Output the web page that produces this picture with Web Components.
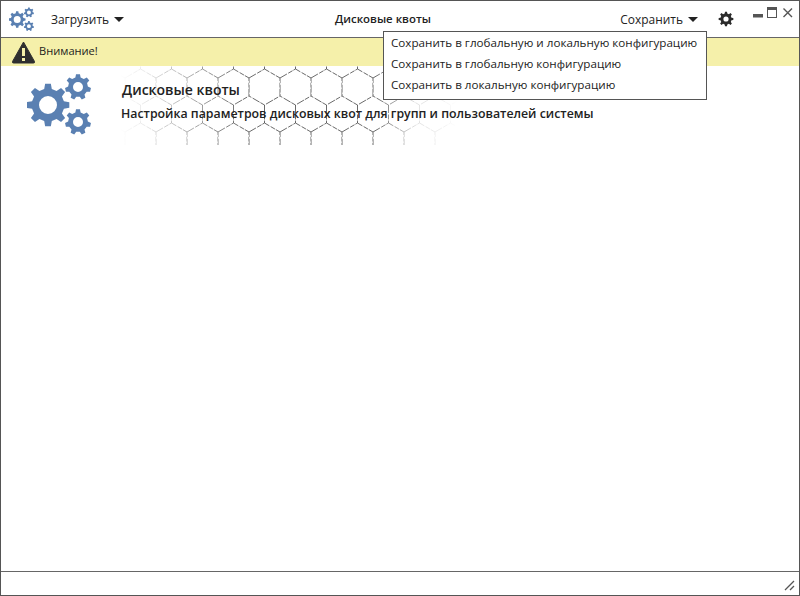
<!DOCTYPE html>
<html lang="ru">
<head>
<meta charset="utf-8">
<title>Дисковые квоты</title>
<style>
html,body{ margin:0; height:100%; background:#fff; }
body{ font:11.7px "Open Sans",sans-serif; color:#222; }
</style>
</head>
<body>
<app-window>
  <app-toolbar slot="top" title-text="Дисковые квоты"></app-toolbar>
  <warning-bar slot="top">Внимание!</warning-bar>
  <page-header heading="Дисковые квоты" sub="Настройка параметров дисковых квот для групп и пользователей системы"></page-header>
  <save-menu slot="over">
    <div>Сохранить в глобальную и локальную конфигурацию</div>
    <div>Сохранить в глобальную конфигурацию</div>
    <div>Сохранить в локальную конфигурацию</div>
  </save-menu>
</app-window>

<script>
// gear outline, teeth are drawn as trapezoids round the rim
function gearPath(cx, cy, r, hole, teeth){
   let d = "";
   let step = Math.PI * 2 / teeth;
   let inner = r * 0.76;
   for(let i = 0; i < teeth; i++){
      let a = i * step - Math.PI / 2;
      let pts = [
         [inner, a - step * 0.3],
         [r, a - step * 0.17],
         [r, a + step * 0.17],
         [inner, a + step * 0.3]
      ];
      pts.forEach((p, n) => {
         let x = (cx + p[0] * Math.cos(p[1])).toFixed(2);
         let y = (cy + p[0] * Math.sin(p[1])).toFixed(2);
         d += (i == 0 && n == 0 ? "M" : "L") + x + " " + y;
      });
   }
   d += `ZM${cx - hole} ${cy}a${hole} ${hole} 0 1 0 ${hole * 2} 0a${hole} ${hole} 0 1 0 ${-hole * 2} 0Z`;
   return d;
}

window.customElements.define('gears-icon', class extends HTMLElement {
   connectedCallback(){
      this.attachShadow({mode:'open'}).innerHTML = `
      <style>:host{ display:block; line-height:0; } svg{ display:block; }</style>
      <svg viewBox="0 0 64 64" style="width:100%;height:100%" fill="#5a80b2" fill-rule="evenodd">
         <path d="${gearPath(21, 32, 21.5, 9, 8)}"/>
         <path d="${gearPath(51, 14, 13, 5, 7)}"/>
         <path d="${gearPath(51, 49, 13, 5, 7)}"/>
      </svg>`;
   }
});

window.customElements.define('tool-button', class extends HTMLElement {
   connectedCallback(){
      this.attachShadow({mode:'open'}).innerHTML = `
      <style>
      :host{ display:inline-flex; align-items:center; gap:5px; color:#222; font-size:11.95px; }
      i{ display:block; width:0; height:0; border:5px solid transparent; border-top:5.5px solid #222; border-bottom:0; }
      </style>
      <slot></slot><i></i>`;
   }
});

window.customElements.define('app-toolbar', class extends HTMLElement {
   connectedCallback(){
      this.attachShadow({mode:'open'}).innerHTML = `
      <style>
      :host{ display:grid; grid-template-columns:334px auto 1fr; align-items:center; height:36px; border-bottom:1px solid #666; position:relative; }
      .left,.right{ display:flex; align-items:center; }
      .left{ padding-left:8px; gap:17px; }
      .right{ justify-content:flex-end; height:100%; }
      gears-icon{ width:25px; height:25px; }
      .title{ font-weight:600; font-size:11.4px; padding-bottom:2px; }
      .cog{ margin-left:20px; margin-right:18px; display:block; }
      .win{ align-self:flex-start; margin:6px 6px 0 0; display:block; }
      </style>
      <div class="left"><gears-icon></gears-icon><tool-button>Загрузить</tool-button></div>
      <div class="title">${this.getAttribute("title-text")}</div>
      <div class="right">
         <tool-button>Сохранить</tool-button>
         <svg class="cog" width="16" height="16" viewBox="0 0 16 16" fill="#2b2b2b" fill-rule="evenodd"><path d="${gearPath(8, 8, 7.4, 2.6, 8)}"/></svg>
         <svg class="win" width="41" height="12" viewBox="0 0 41 12">
            <rect x="1" y="7" width="10" height="3.5" fill="#555"/>
            <rect x="15.5" y="0.5" width="9" height="10" fill="none" stroke="#555"/>
            <rect x="15" y="0" width="10" height="3" fill="#555"/>
            <path d="M31.5 1.5l8.5 8.5M40 1.5l-8.5 8.5" stroke="#555" stroke-width="1.4" fill="none"/>
         </svg>
      </div>`;
   }
});

window.customElements.define('warning-bar', class extends HTMLElement {
   connectedCallback(){
      this.attachShadow({mode:'open'}).innerHTML = `
      <style>
      :host{ display:flex; align-items:center; gap:3px; height:28px; padding-left:10px; background:#f5f0aa; font-size:11.1px; font-weight:500; color:#1c1c1c; }
      svg{ display:block; }
      span{ padding-bottom:3px; }
      </style>
      <svg width="25" height="24" viewBox="0 0 25 24">
         <path d="M12.5 2L23.5 21.5Q24 23 22.5 23H2.5Q1 23 1.5 21.5Z" fill="#2f2f2f" stroke="#2f2f2f" stroke-linejoin="round"/>
         <rect x="11" y="8" width="3" height="8" fill="#f5f0aa"/>
         <rect x="11" y="18" width="3" height="3" fill="#f5f0aa"/>
      </svg>
      <span><slot></slot></span>`;
   }
});

window.customElements.define('hex-backdrop', class extends HTMLElement {
   connectedCallback(){
      let fade = "linear-gradient(90deg,transparent 0,rgba(0,0,0,.15) 25px,rgba(0,0,0,.55) 70px,#000 125px,#000 255px,rgba(0,0,0,.2) 295px,rgba(0,0,0,.08) 325px,transparent 337px)";
      this.attachShadow({mode:'open'}).innerHTML = `
      <style>
      :host{ display:block; position:absolute; left:119px; top:0; width:337px; height:79px;
         -webkit-mask-image:${fade}; mask-image:${fade}; }
      svg{ display:block; }
      </style>
      <svg width="337" height="79">
         <defs>
            <pattern id="hex" patternUnits="userSpaceOnUse" width="31" height="54" x="5" y="0">
               <path d="M0 12L15.5 3L31 12V30L15.5 39L0 30ZM15.5 39V57M15.5 -15V3" fill="none" stroke="#444" stroke-width=".8" stroke-dasharray="8 1.5 5 1"/>
            </pattern>
         </defs>
         <rect width="337" height="79" fill="url(#hex)"/>
      </svg>`;
   }
});

window.customElements.define('page-header', class extends HTMLElement {
   connectedCallback(){
      this.attachShadow({mode:'open'}).innerHTML = `
      <style>
      :host{ display:flex; position:relative; height:80px; padding:7px 0 0 26px; box-sizing:border-box; color:#222; }
      gears-icon{ width:64px; height:64px; flex:none; }
      .text{ position:relative; margin-left:31px; padding-top:7px; }
      .h{ font-size:14px; font-weight:600; line-height:20px; }
      .s{ font-size:12.35px; font-weight:600; line-height:18px; margin-top:5px; margin-left:-1px; white-space:nowrap; }
      </style>
      <hex-backdrop></hex-backdrop>
      <gears-icon></gears-icon>
      <div class="text">
         <div class="h">${this.getAttribute("heading")}</div>
         <div class="s">${this.getAttribute("sub")}</div>
      </div>`;
   }
});

window.customElements.define('save-menu', class extends HTMLElement {
   connectedCallback(){
      this.attachShadow({mode:'open'}).innerHTML = `
      <style>
      :host{ display:block; position:absolute; left:382px; top:30px; width:324px; height:69px; box-sizing:border-box; background:#fff; border:1px solid #555; padding:0 0 0 7px; font-size:11.65px; color:#222; line-height:21px; white-space:nowrap; }
      </style>
      <slot></slot>`;
   }
});

window.customElements.define('status-bar', class extends HTMLElement {
   connectedCallback(){
      this.attachShadow({mode:'open'}).innerHTML = `
      <style>
      :host{ display:flex; justify-content:flex-end; align-items:flex-end; height:23px; border-top:1px solid #666; flex:none; }
      svg{ display:block; margin:0 4px 4px 0; }
      </style>
      <svg width="11" height="11" viewBox="0 0 11 11"><path d="M1 10L10 1M6 10L10 6" stroke="#555" stroke-width="1.3" fill="none"/></svg>`;
   }
});

window.customElements.define('app-window', class extends HTMLElement {
   connectedCallback(){
      this.attachShadow({mode:'open'}).innerHTML = `
      <style>
      :host{ display:flex; flex-direction:column; position:relative; width:800px; height:596px; box-sizing:border-box; border:1px solid #555; background:#fff; overflow:hidden; }
      main{ flex:1; }
      </style>
      <slot name="top"></slot>
      <main><slot></slot></main>
      <status-bar></status-bar>
      <slot name="over"></slot>`;
   }
});
</script>
</body>
</html>
